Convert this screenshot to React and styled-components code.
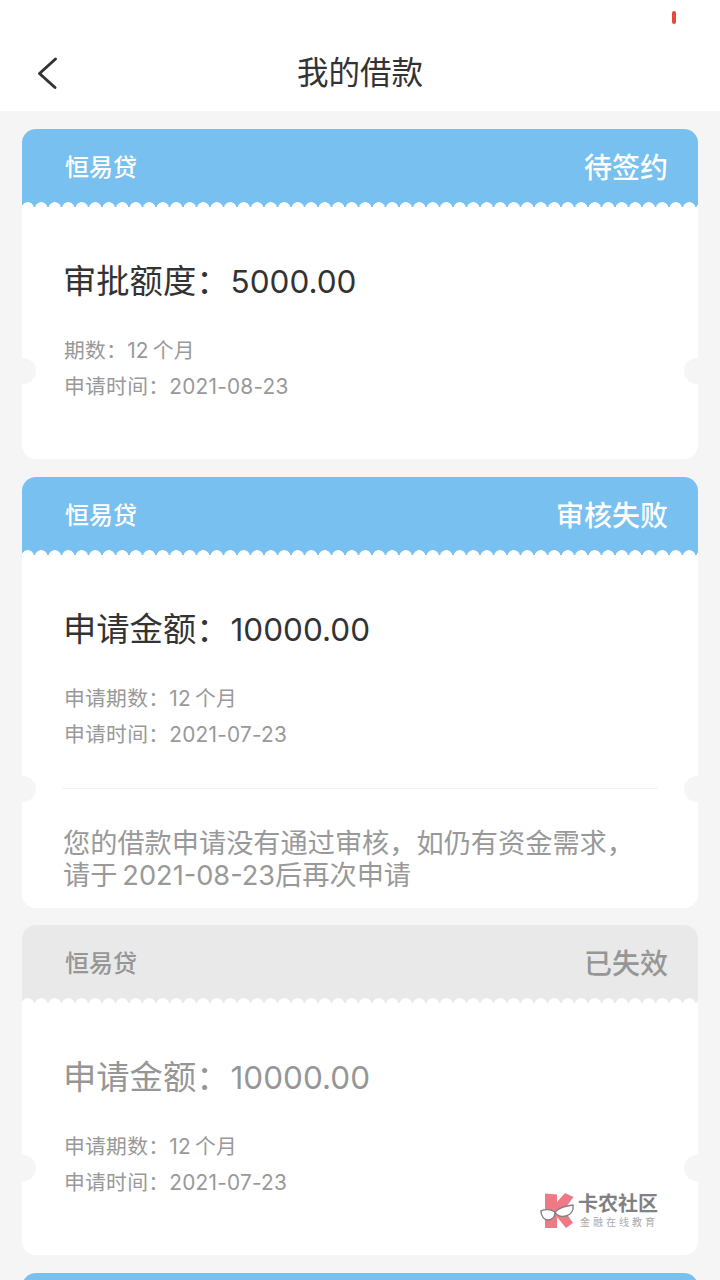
import React from 'react'
import styled, { createGlobalStyle } from 'styled-components'

const GlobalStyle = createGlobalStyle`
  html, body {
    margin: 0;
    padding: 0;
    height: 1280px;
    overflow: hidden;
    background: #f5f5f5;
    font-family: Inter, "Noto Sans CJK SC", "Noto Sans", sans-serif;
  }
`

const Page = styled.div`
  width: 720px;
  height: 1280px;
  overflow: hidden;
  position: relative;
`

const TopBar = styled.header`
  height: 111px;
  background: #fff;
  display: flex;
  flex-direction: column;
`

const StatusBar = styled.div`
  height: 34px;
  display: flex;
  justify-content: flex-end;
  align-items: flex-start;
  padding: 11px 44px 0 0;
  box-sizing: border-box;
`

const BatteryMark = styled.span`
  width: 4px;
  height: 13px;
  border-radius: 2px;
  background: #e8473d;
`

const NavRow = styled.div`
  position: relative;
  height: 77px;
  display: flex;
  align-items: center;
  justify-content: center;
`

const BackButton = styled.svg`
  position: absolute;
  left: 36px;
  top: 20px;
  width: 24px;
  height: 36px;
`

const Title = styled.h1`
  margin: 0;
  font-size: 31.5px;
  font-weight: 400;
  line-height: 40px;
  color: #333;
`

const List = styled.main`
  display: flex;
  flex-direction: column;
  gap: 18px;
  padding: 18px 22px 0;
`

const Card = styled.section`
  position: relative;
  flex: none;
  height: ${p => p.$height}px;
  background: #fff;
  border-radius: 14px;
  overflow: hidden;
  display: flex;
  flex-direction: column;
`

const Notch = styled.span`
  position: absolute;
  top: ${p => p.$top - 13}px;
  ${p => (p.$side === 'left' ? 'left: -12px;' : 'right: -12px;')}
  width: 26px;
  height: 26px;
  border-radius: 50%;
  background: #f5f5f5;
`

const CardHeader = styled.div`
  position: relative;
  flex: none;
  height: 78px;
  box-sizing: border-box;
  padding: 0 30px 0 43px;
  display: flex;
  align-items: center;
  justify-content: space-between;
  background: ${p => (p.$muted ? '#e9e9e9' : '#78c0ef')};
  color: ${p => (p.$muted ? '#969696' : '#fff')};

  &::after {
    content: '';
    position: absolute;
    left: -1px;
    right: 0;
    bottom: 0;
    height: 5px;
    background-image: radial-gradient(circle at 50% 6.5px, #fff 6px, transparent 6.6px);
    background-size: 13.5px 5px;
    background-repeat: repeat-x;
  }
`

const Product = styled.span`
  font-size: 24px;
  line-height: 32px;
  font-weight: 500;
`

const Status = styled.span`
  font-size: 28px;
  line-height: 36px;
  font-weight: 500;
`

const CardBody = styled.div`
  flex: 1;
  display: flex;
  flex-direction: column;
  padding: 0 40px 0 42px;
`

const Amount = styled.div`
  margin-top: 51px;
  margin-left: -1px;
  font-size: 33.3px;
  line-height: 46px;
  white-space: nowrap;
  color: ${p => (p.$muted ? '#969696' : '#333')};
`

const AmountValue = styled.span`
  font-size: 31.5px;
  margin-left: 1px;
`

const Meta = styled.div`
  margin-top: ${p => (p.$first ? 33 : 10)}px;
  font-size: 20.8px;
  line-height: 26px;
  letter-spacing: 0.25px;
  white-space: nowrap;
  color: #999;
`

const Divider = styled.hr`
  margin: 40px 0 0 -2px;
  border: 0;
  border-top: 1px solid #f2f2f2;
`

const Notice = styled.p`
  margin: 39px 0 0 -1px;
  font-size: 27.2px;
  line-height: 32px;
  color: #999;
  white-space: nowrap;
`

const Watermark = styled.div`
  position: absolute;
  left: 540px;
  top: 1192px;
  display: flex;
  align-items: center;
`

const WatermarkText = styled.div`
  display: flex;
  flex-direction: column;
  align-items: flex-start;
`

const WatermarkName = styled.span`
  font-size: 20px;
  line-height: 23px;
  font-weight: 700;
  color: #808184;
`

const WatermarkSub = styled.span`
  font-size: 10px;
  line-height: 12px;
  letter-spacing: 3px;
  margin-left: 2px;
  color: #a9a9ab;
  white-space: nowrap;
`

const cards = [
  {
    height: 330,
    notchTop: 242,
    status: '待签约',
    label: '审批额度：',
    amount: '5000.00',
    meta: ['期数：12\u2009个月', '申请时间：2021-08-23'],
  },
  {
    height: 431,
    notchTop: 312,
    status: '审核失败',
    label: '申请金额：',
    amount: '10000.00',
    meta: ['申请期数：12\u2009个月', '申请时间：2021-07-23'],
    notice: ['您的借款申请没有通过审核，如仍有资金需求，', '请于\u20092021-08-23后再次申请'],
  },
  {
    height: 330,
    notchTop: 243,
    muted: true,
    status: '已失效',
    label: '申请金额：',
    amount: '10000.00',
    meta: ['申请期数：12\u2009个月', '申请时间：2021-07-23'],
  },
]

function LoanCard({ card, index }) {
  return (
    <Card $height={card.height} style={index === 2 ? { marginTop: -1 } : undefined}>
      <CardHeader $muted={card.muted}>
        <Product>恒易贷</Product>
        <Status>{card.status}</Status>
      </CardHeader>
      <CardBody>
        <Amount $muted={card.muted}>
          {card.label}
          <AmountValue>{card.amount}</AmountValue>
        </Amount>
        {card.meta.map((line, i) => (
          <Meta key={line} $first={i === 0}>{line}</Meta>
        ))}
        {card.notice && (
          <>
            <Divider />
            <Notice>
              {card.notice[0]}
              <br />
              {card.notice[1]}
            </Notice>
          </>
        )}
      </CardBody>
      <Notch $side="left" $top={card.notchTop} />
      <Notch $side="right" $top={card.notchTop} />
    </Card>
  )
}

function Logo() {
  return (
    <svg width="38" height="36" viewBox="0 0 38 36">
      <path d="M5 1.5L17 2.5V10L25 1L33.5 5L24 18L33 31L26 36L17 25V36H5z" fill="#ef7a86" />
      <path d="M0.8 19C5 17 11 17 15 20C15 25 12 28 8 28C4 28 1.5 24 0.8 19z" fill="#fff" stroke="#808184" strokeWidth="1.4" strokeLinejoin="round" />
      <path d="M15 20C20 15 26 14 33 13C34 18 31 23 26 24C21 25 17 24 15 20z" fill="#fff" stroke="#808184" strokeWidth="1.4" strokeLinejoin="round" />
    </svg>
  )
}

export default function App() {
  return (
    <Page>
      <GlobalStyle />
      <TopBar>
        <StatusBar>
          <BatteryMark />
        </StatusBar>
        <NavRow>
          <BackButton viewBox="0 0 24 36">
            <path d="M19.5 5L3.5 19.5 19 33.5" fill="none" stroke="#333" strokeWidth="3" strokeLinecap="round" strokeLinejoin="round" />
          </BackButton>
          <Title>我的借款</Title>
        </NavRow>
      </TopBar>
      <List>
        {cards.map((card, i) => (
          <LoanCard key={i} card={card} index={i} />
        ))}
        <Card $height={330}>
          <CardHeader />
        </Card>
      </List>
      <Watermark>
        <Logo />
        <WatermarkText>
          <WatermarkName>卡农社区</WatermarkName>
          <WatermarkSub>金融在线教育</WatermarkSub>
        </WatermarkText>
      </Watermark>
    </Page>
  )
}
